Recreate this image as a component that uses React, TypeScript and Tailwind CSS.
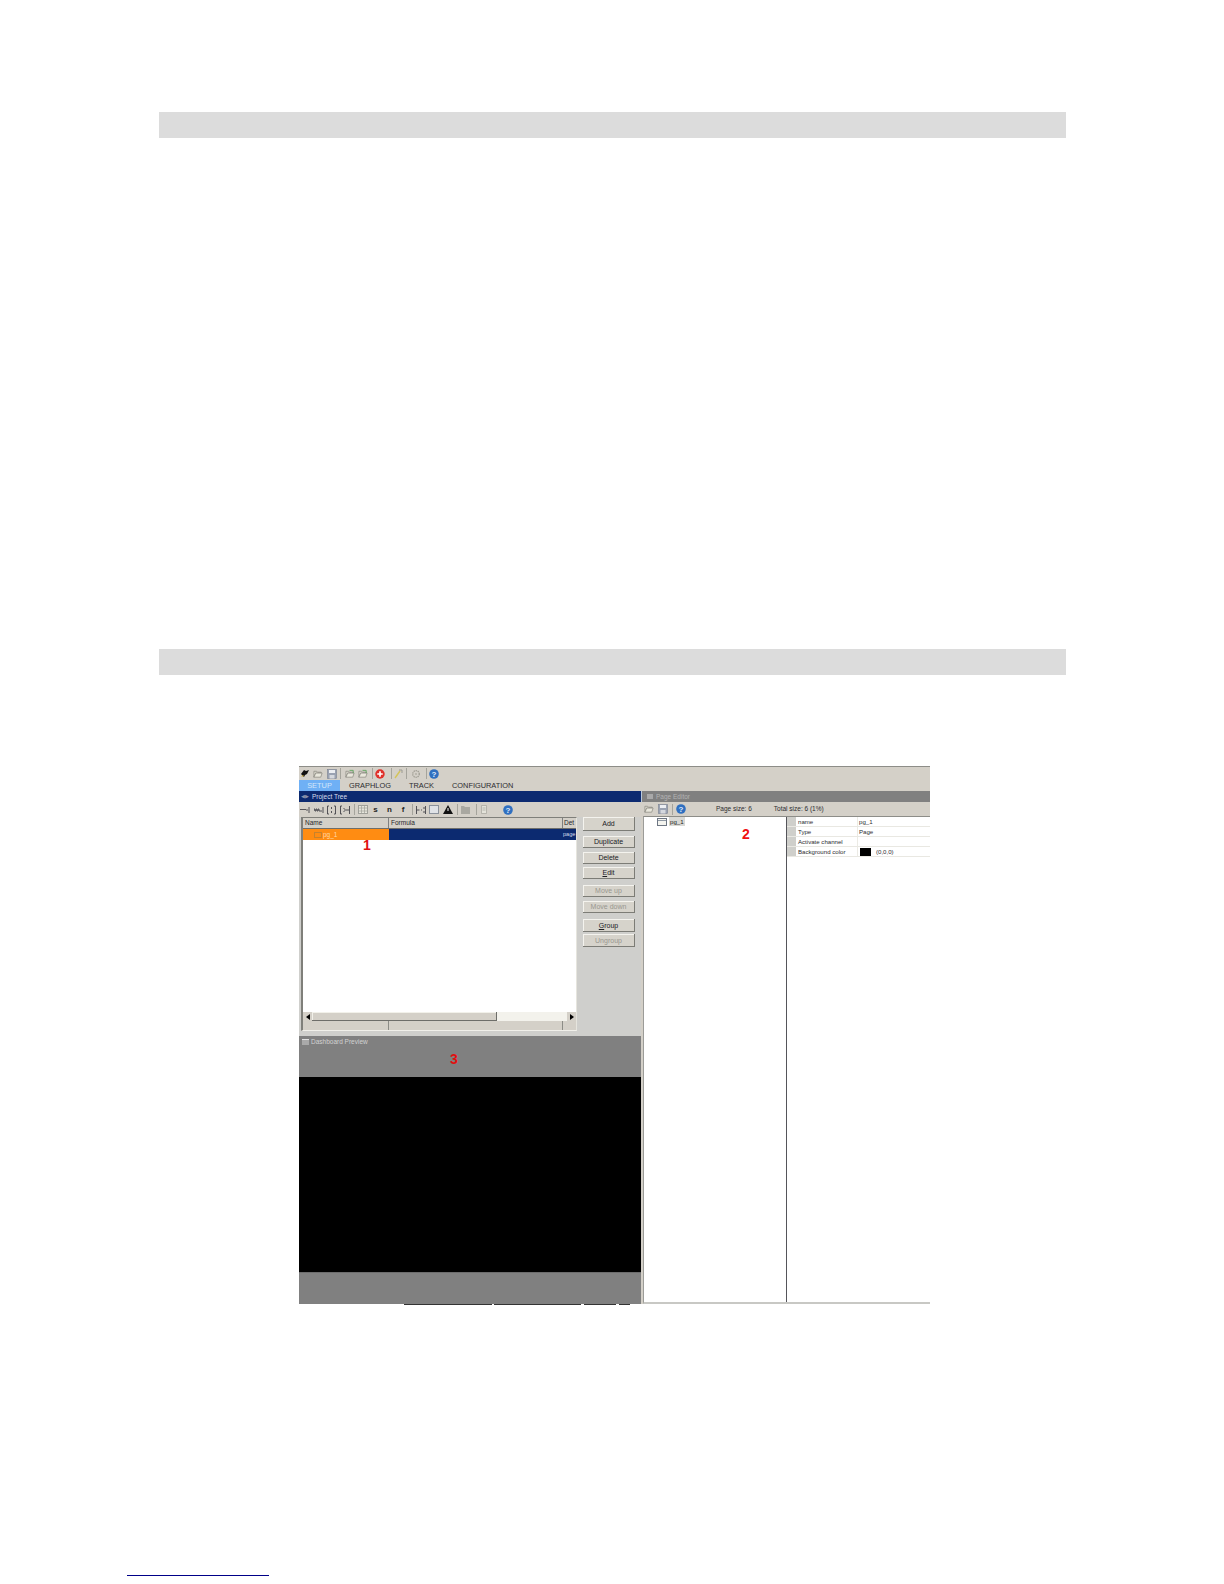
const font = { fontFamily: '"Liberation Sans", Arial, sans-serif' };

function Sep({ className }: { className: string }) {
  return <div className={`w-px h-[11px] bg-[#a5a49c] shrink-0 ${className}`} />;
}

function Help({ className }: { className: string }) {
  return (
    <svg className={className} width="10" height="10" viewBox="0 0 10 10">
      <circle cx="5" cy="5" r="4.8" fill="#2f6fc0" />
      <text x="5" y="7.8" textAnchor="middle" fontSize="8" fontWeight="700" fill="#dfeafa" fontFamily="Liberation Sans">?</text>
    </svg>
  );
}

function Folder({ className, arrow }: { className: string; arrow?: boolean }) {
  return (
    <svg className={className} width="10" height="10" viewBox="0 0 11 10">
      <path d="M1 2h3l1 1h4v1H3L1 8.500z" fill="#dedcd0" stroke="#8a8980" strokeWidth=".8" />
      <path d="M3 4h7L8.500 8.500H1z" fill="#e9e7dc" stroke="#8a8980" strokeWidth=".8" />
      {arrow && <path d="M5 1h4v3" fill="none" stroke="#5fa35f" strokeWidth="1" />}
    </svg>
  );
}

function Disk({ className }: { className: string }) {
  return (
    <svg className={className} width="10" height="10" viewBox="0 0 10 10">
      <rect x=".5" y=".5" width="9" height="9" fill="#9aa2b2" stroke="#7b8090" strokeWidth=".6" />
      <rect x="2" y="1" width="6" height="3" fill="#eceef2" />
      <rect x="2.500" y="6" width="5" height="3.500" fill="#d5d8de" />
    </svg>
  );
}

function TopToolbar() {
  return (
    <div className="h-[13px] flex items-center">
      <svg className="ml-[2px]" width="8" height="9" viewBox="0 0 8 9">
        <path d="M0 5l3-4 2 1 3-1-2 4-2 1-1 2z" fill="#111" />
        <path d="M0 8l3-1-1-1z" fill="#d8b030" />
      </svg>
      <Folder className="ml-[4px]" />
      <Disk className="ml-[4px]" />
      <Sep className="ml-[3px]" />
      <Folder className="ml-[4px]" arrow />
      <Folder className="ml-[3px]" arrow />
      <Sep className="ml-[4px]" />
      <svg className="ml-[2px]" width="10" height="10" viewBox="0 0 11 11">
        <circle cx="5.500" cy="5.500" r="5.200" fill="#e0302a" />
        <path d="M5.500 2.500v6M2.500 5.500h6" stroke="#fff" strokeWidth="1.800" />
      </svg>
      <Sep className="ml-[6px]" />
      <svg className="ml-[2px]" width="9" height="11" viewBox="0 0 9 11">
        <path d="M1 10L6 3" stroke="#d4c458" strokeWidth="1.400" />
        <path d="M5 2h3M8 2v3" stroke="#9c9a90" strokeWidth="1" />
      </svg>
      <Sep className="ml-[3px]" />
      <svg className="ml-[4px]" width="10" height="10" viewBox="0 0 11 11">
        <circle cx="5.500" cy="5.500" r="3.600" fill="none" stroke="#a09e94" strokeWidth="1.400" strokeDasharray="1.500 .8" />
        <circle cx="5.500" cy="5.500" r="1.200" fill="#b4b2a8" />
      </svg>
      <Sep className="ml-[5px]" />
      <Help className="ml-[2px]" />
    </div>
  );
}

function Tabs() {
  return (
    <div className="h-[11px] flex items-center text-[7.400px] leading-[11px] text-[#2c2c30]">
      <div className="w-[41px] h-full bg-[#6fb0f5] text-[#d4e6fa] text-center">SETUP</div>
      <div className="ml-[9px]">GRAPHLOG</div>
      <div className="ml-[18px]">TRACK</div>
      <div className="ml-[18px]">CONFIGURATION</div>
    </div>
  );
}

function ToolGlyph({ d, className, w }: { d: string; className: string; w: number }) {
  return (
    <svg className={className} width={w} height="10" viewBox={`0 0 ${w} 10`}>
      <path d={d} fill="none" stroke="#44444a" strokeWidth=".9" />
    </svg>
  );
}

function TreeToolbar() {
  return (
    <div className="h-[15px] flex items-center text-[8px] font-bold text-[#222]">
      <ToolGlyph w={10} className="ml-[1px]" d="M0 5l1-1 1 1 1-1 1 1 1-1 1 1h2M9 2v6" />
      <ToolGlyph w={10} className="ml-[4px]" d="M0 6V4h1v2h1V4h1v2h1V4h1v2h3M9 2v6" />
      <ToolGlyph w={9} className="ml-[3px]" d="M2 1H.5v8H2M7 1h1.500v8H7M4.500 2v2M4.500 6v2" />
      <ToolGlyph w={10} className="ml-[4px]" d="M2 1H.5v8H2M4 3v1M4 6v1M4 5h5M9.500 1v8" />
      <Sep className="ml-[4px]" />
      <svg className="ml-[3px]" width="10" height="9" viewBox="0 0 10 9">
        <rect x=".5" y=".5" width="9" height="8" fill="#e6e5dc" stroke="#a0a09a" />
        <path d="M.5 3h9M.5 6h9M3.500 .5v8M6.500 .5v8" stroke="#a0a09a" strokeWidth=".7" />
      </svg>
      <span className="ml-[5px] w-[5px] text-center">s</span>
      <span className="ml-[9px] w-[5px] text-center">n</span>
      <span className="ml-[9px] w-[4px] text-center">f</span>
      <Sep className="ml-[7px]" />
      <ToolGlyph w={10} className="ml-[3px]" d="M.5 1v8M.5 5h3M5 5h1M8 2v2M8 6v2M9.500 1v8" />
      <svg className="ml-[3px]" width="10" height="9" viewBox="0 0 10 9">
        <rect x=".5" y=".5" width="9" height="8" fill="#dfe2e6" stroke="#8b929c" />
      </svg>
      <svg className="ml-[4px]" width="10" height="9" viewBox="0 0 10 9">
        <path d="M5 0l5 9H0z" fill="#111" />
        <path d="M5 3v3" stroke="#fff" />
      </svg>
      <Sep className="ml-[4px]" />
      <svg className="ml-[3px]" width="9" height="8" viewBox="0 0 9 8">
        <path d="M0 0h3l1 1h5v7H0z" fill="#a9a8a1" />
      </svg>
      <Sep className="ml-[6px]" />
      <svg className="ml-[4px]" width="6" height="9" viewBox="0 0 6 9">
        <path d="M.5 .5h5v8h-5zM1.500 3h3M1.500 5h3" fill="#e4e3da" stroke="#a5a49c" strokeWidth=".7" />
      </svg>
      <Help className="ml-[16px]" />
    </div>
  );
}

function ActionButton({ children, off, className }: { children: React.ReactNode; off?: boolean; className: string }) {
  return (
    <div
      className={`${className} w-[52px] bg-[#d6d3cb] border-r border-b border-[#7c7c76] shadow-[inset_1px_1px_0_#f4f3ee] flex items-center justify-center text-[7px] leading-none ${off ? "text-[#98978f]" : "text-[#202024]"}`}
    >
      <span>{children}</span>
    </div>
  );
}

function TreeList() {
  return (
    <div className="w-[276px] h-[214px] flex flex-col border-l-2 border-t border-[#7f7f7a] border-r border-r-[#e6e5de] border-b border-b-[#f1f0ea]">
      <div className="h-[11px] flex bg-[#d4d0c8] text-[6.500px] leading-[10px] text-[#26262a] border-b border-[#6e6e6a]">
        <div className="w-[86px] pl-[2px] border-r border-[#808080]">Name</div>
        <div className="w-[174px] pl-[2px] border-r border-[#808080]">Formula</div>
        <div className="flex-1 pl-[1px]">Det</div>
      </div>
      <div className="h-[11px] flex text-[6.500px] leading-[11px]">
        <div className="w-[86px] bg-[#ff8c12] flex items-center pl-[11px] gap-[1px] text-[#ffd9a8]">
          <div className="w-[8px] h-[6px] border border-[#c7822c]" />
          pg_1
        </div>
        <div className="w-[174px] bg-[#0c2a70]" />
        <div className="flex-1 bg-[#0c2a70] text-[#d6dcec] text-[5.600px]">page</div>
      </div>
      <div className="flex-1 bg-white" />
      <div className="h-[9px] flex items-stretch bg-[#f3f2ec]">
        <div className="w-[9px] bg-[#d4d0c8] flex items-center justify-center">
          <div className="border-y-[3px] border-y-transparent border-r-[4px] border-r-black" />
        </div>
        <div className="w-[185px] bg-[#d4d0c8] border-r border-b border-[#6e6e6a] shadow-[inset_1px_1px_0_#f2f1ea]" />
        <div className="flex-1" />
        <div className="w-[9px] bg-[#d4d0c8] flex items-center justify-center">
          <div className="border-y-[3px] border-y-transparent border-l-[4px] border-l-black" />
        </div>
      </div>
      <div className="h-[9px] flex bg-[#d4d0c8]">
        <div className="w-[86px] border-r border-[#8c8c86]" />
        <div className="w-[174px] border-r border-[#8c8c86]" />
      </div>
    </div>
  );
}

function LeftPane() {
  return (
    <div className="w-[342px] flex flex-col">
      <div className="h-[11px] bg-[#0c2a70] flex items-center pl-[2px] gap-[3px] text-[6.500px] text-[#d8deee]">
        <span className="text-[#8b93ad] text-[5px] leading-none">◀▶</span>
        Project Tree
      </div>
      <TreeToolbar />
      <div className="h-[219px] bg-[#cfcfcc] flex pl-[2px]">
        <TreeList />
        <div className="ml-[6px] flex flex-col">
          <ActionButton className="h-[14px]">Add</ActionButton>
          <ActionButton className="h-[12px] mt-[5px]">Duplicate</ActionButton>
          <ActionButton className="h-[12px] mt-[4px]">Delete</ActionButton>
          <ActionButton className="h-[12px] mt-[3px]"><span className="underline">E</span>dit</ActionButton>
          <ActionButton off className="h-[12px] mt-[6px]">Move up</ActionButton>
          <ActionButton off className="h-[12px] mt-[4px]">Move down</ActionButton>
          <ActionButton className="h-[13px] mt-[6px]"><span className="underline">G</span>roup</ActionButton>
          <ActionButton off className="h-[13px] mt-[2px]">Ungroup</ActionButton>
        </div>
      </div>
      <div className="h-[41px] bg-[#808080] relative flex items-start pl-[3px] pt-[1px] gap-[2px] text-[6.500px] leading-[10px] text-[#d2d2d2]">
        <div className="mt-[2px] w-[7px] h-[6px] bg-[#a9a9a9] border-t border-[#e0e0e0]" />
        Dashboard Preview
        <span className="absolute left-[151px] top-[16px] text-[14px] leading-[15px] font-bold text-[#e01010]">3</span>
      </div>
      <div className="h-[195px] bg-black" />
      <div className="h-[32px] bg-[#808080] border-t border-[#6c6c6c]" />
    </div>
  );
}

function PropRow({ name, children }: { name: string; children?: React.ReactNode }) {
  return (
    <div className="h-[10px] flex border-b border-[#e9e8e2] text-[6.100px] leading-[9px] text-[#2c2c30]">
      <div className="w-[9px] bg-[#cfcfcb] shrink-0" />
      <div className="w-[62px] pl-[2px] border-r border-[#ecebe5]">{name}</div>
      <div className="flex-1 pl-[1px] flex items-center gap-[5px]">{children}</div>
    </div>
  );
}

function RightPane() {
  return (
    <div className="flex-1 flex flex-col">
      <div className="h-[11px] bg-[#808080] border-l border-[#b8c8dc] flex items-center pl-[5px] gap-[3px] text-[6.500px] text-[#b4b4b4]">
        <div className="w-[6px] h-[5px] bg-[#a9a9a9]" />
        Page Editor
      </div>
      <div className="h-[14px] bg-[#d4d0c8] flex items-center text-[6.500px] text-[#2c2c30]">
        <Folder className="ml-[3px]" />
        <Disk className="ml-[4px]" />
        <Sep className="ml-[4px]" />
        <Help className="ml-[3px]" />
        <span className="ml-[30px]">Page size: 6</span>
        <span className="ml-[22px]">Total size: 6 (1%)</span>
      </div>
      <div className="flex-1 flex ml-[2px] bg-white border-l border-[#9c9c98] border-t border-t-[#8d8d88] border-b-2 border-b-[#c8c8c4]">
        <div className="w-[143px] border-r border-[#55555a] relative pl-[13px]">
          <div className="flex items-center gap-[2px] text-[6.100px] leading-[9px] text-[#222]">
            <svg width="10" height="8" viewBox="0 0 10 8">
              <rect x=".5" y=".5" width="9" height="7" fill="#f4f4ef" stroke="#6d7683" />
              <path d="M1 2.500h8" stroke="#8e98a4" />
            </svg>
            <span className="bg-[#d8d8d4] px-[1px]">pg_1</span>
          </div>
          <span className="absolute left-[98px] top-[10px] text-[14px] leading-[15px] font-bold text-[#f01010]">2</span>
        </div>
        <div className="flex-1">
          <PropRow name="name">pg_1</PropRow>
          <PropRow name="Type">Page</PropRow>
          <PropRow name="Activate channel" />
          <PropRow name="Background color">
            <div className="w-[11px] h-[8px] bg-black ml-[1px]" />
            (0,0,0)
          </PropRow>
        </div>
      </div>
    </div>
  );
}

function Screenshot() {
  return (
    <div className="mt-[91px] ml-[299px] w-[631px]">
      <div className="h-[538px] flex flex-col bg-[#d4d0c8] border-t border-[#8d8d88] relative">
        <TopToolbar />
        <Tabs />
        <div className="flex-1 flex min-h-0">
          <LeftPane />
          <RightPane />
        </div>
        <span className="absolute left-[64px] top-[71px] text-[14px] leading-[15px] font-bold text-[#e01010]">1</span>
      </div>
      <div className="h-px flex">
        <div className="w-[105px]" />
        <div className="w-[88px] bg-[#333]" />
        <div className="w-[2px]" />
        <div className="w-[87px] bg-[#333]" />
        <div className="w-[3px]" />
        <div className="w-[32px] bg-[#333]" />
        <div className="w-[3px]" />
        <div className="w-[11px] bg-[#333]" />
      </div>
    </div>
  );
}

export default function App() {
  return (
    <div className="w-[1224px] h-[1584px] bg-white overflow-hidden pt-[112px]" style={font}>
      <div className="ml-[159px] w-[907px] h-[26px] bg-[#dcdcdc]" />
      <div className="ml-[159px] mt-[511px] w-[907px] h-[26px] bg-[#dcdcdc]" />
      <Screenshot />
      <div className="ml-[127px] mt-[270px] w-[142px] h-px bg-[#000088]" />
    </div>
  );
}
